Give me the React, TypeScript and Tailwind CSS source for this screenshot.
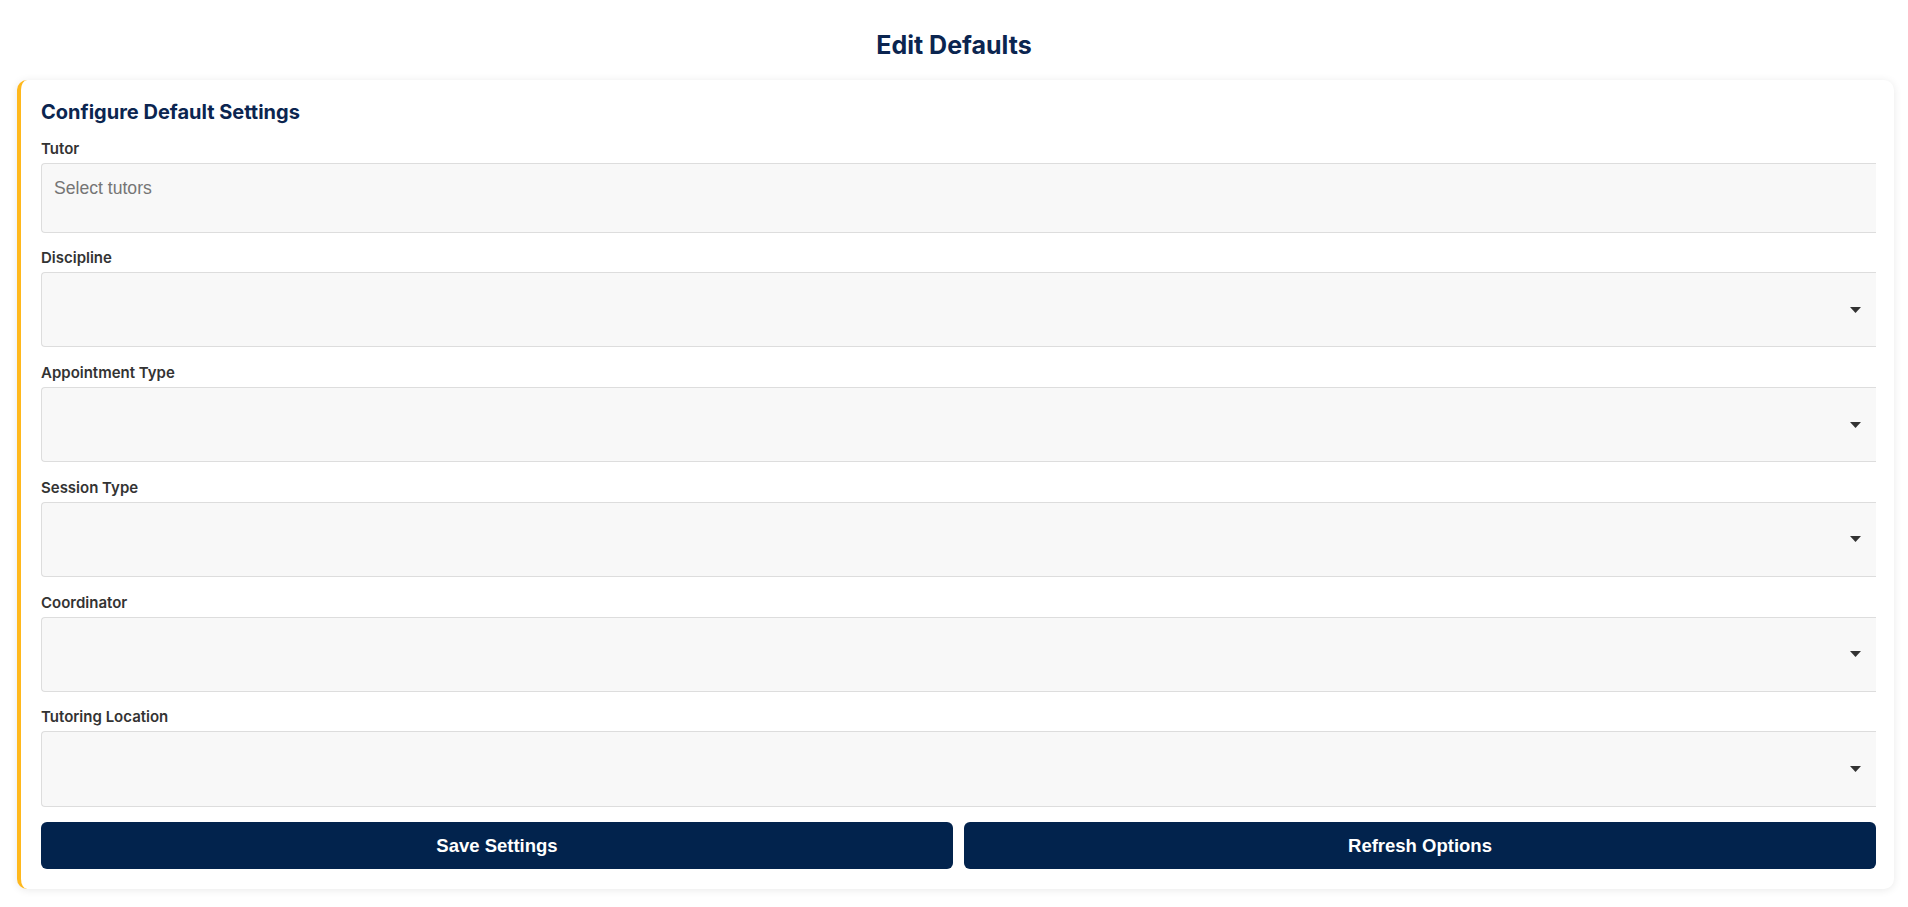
import React from 'react';

const fields = ['Discipline', 'Appointment Type', 'Session Type', 'Coordinator', 'Tutoring Location'];

function Caret() {
  return (
    <svg width="11" height="6" viewBox="0 0 11 6" className="absolute right-[15px] top-1/2 -translate-y-1/2">
      <path d="M0 0 L11 0 L5.5 6 Z" fill="#333333" />
    </svg>
  );
}

export default function App() {
  return (
    <div className="min-h-screen bg-white font-['Inter',sans-serif]">
      <h1 className="pt-[29px] text-center text-[25px] leading-[32px] font-bold text-[#0b2550]">Edit Defaults</h1>

      <div className="mt-[19px] ml-[17px] mr-[14px] rounded-[10px] border-l-4 border-[#ffb81c] bg-white pl-5 pr-[18px] pt-[18px] pb-5 shadow-[0_1px_8px_rgba(0,0,0,0.09)]">
        <h2 className="mb-[13px] text-[20px] leading-[28px] font-bold text-[#0b2550]">Configure Default Settings</h2>

        {/* Tutor multi select */}
        <div className="mb-[15.4px]">
          <label className="mb-[4px] block text-[15px] leading-[20px] font-semibold text-[#333333]">Tutor</label>
          <div className="h-[69.5px] rounded-l-[4px] border border-r-0 border-[#dddddd] bg-[#f8f8f8] pl-[12px] pt-[12.5px] font-['Liberation_Sans',Arial,sans-serif] text-[17.6px] leading-[22px] text-[#757575]">
            Select tutors
          </div>
        </div>

        {fields.map((f) => (
          <div key={f} className="mb-[15.4px]">
            <label className="mb-[4px] block text-[15px] leading-[20px] font-semibold text-[#333333]">{f}</label>
            <div className="relative h-[75.5px] rounded-l-[4px] border border-r-0 border-[#dddddd] bg-[#f8f8f8]">
              <Caret />
            </div>
          </div>
        ))}

        <div className="flex gap-[11px] font-['Liberation_Sans',Arial,sans-serif]">
          <button className="h-[47px] flex-1 rounded-[6px] bg-[#02234d] text-[18.5px] font-bold text-white">Save Settings</button>
          <button className="h-[47px] flex-1 rounded-[6px] bg-[#02234d] text-[18.5px] font-bold text-white">Refresh Options</button>
        </div>
      </div>
    </div>
  );
}
